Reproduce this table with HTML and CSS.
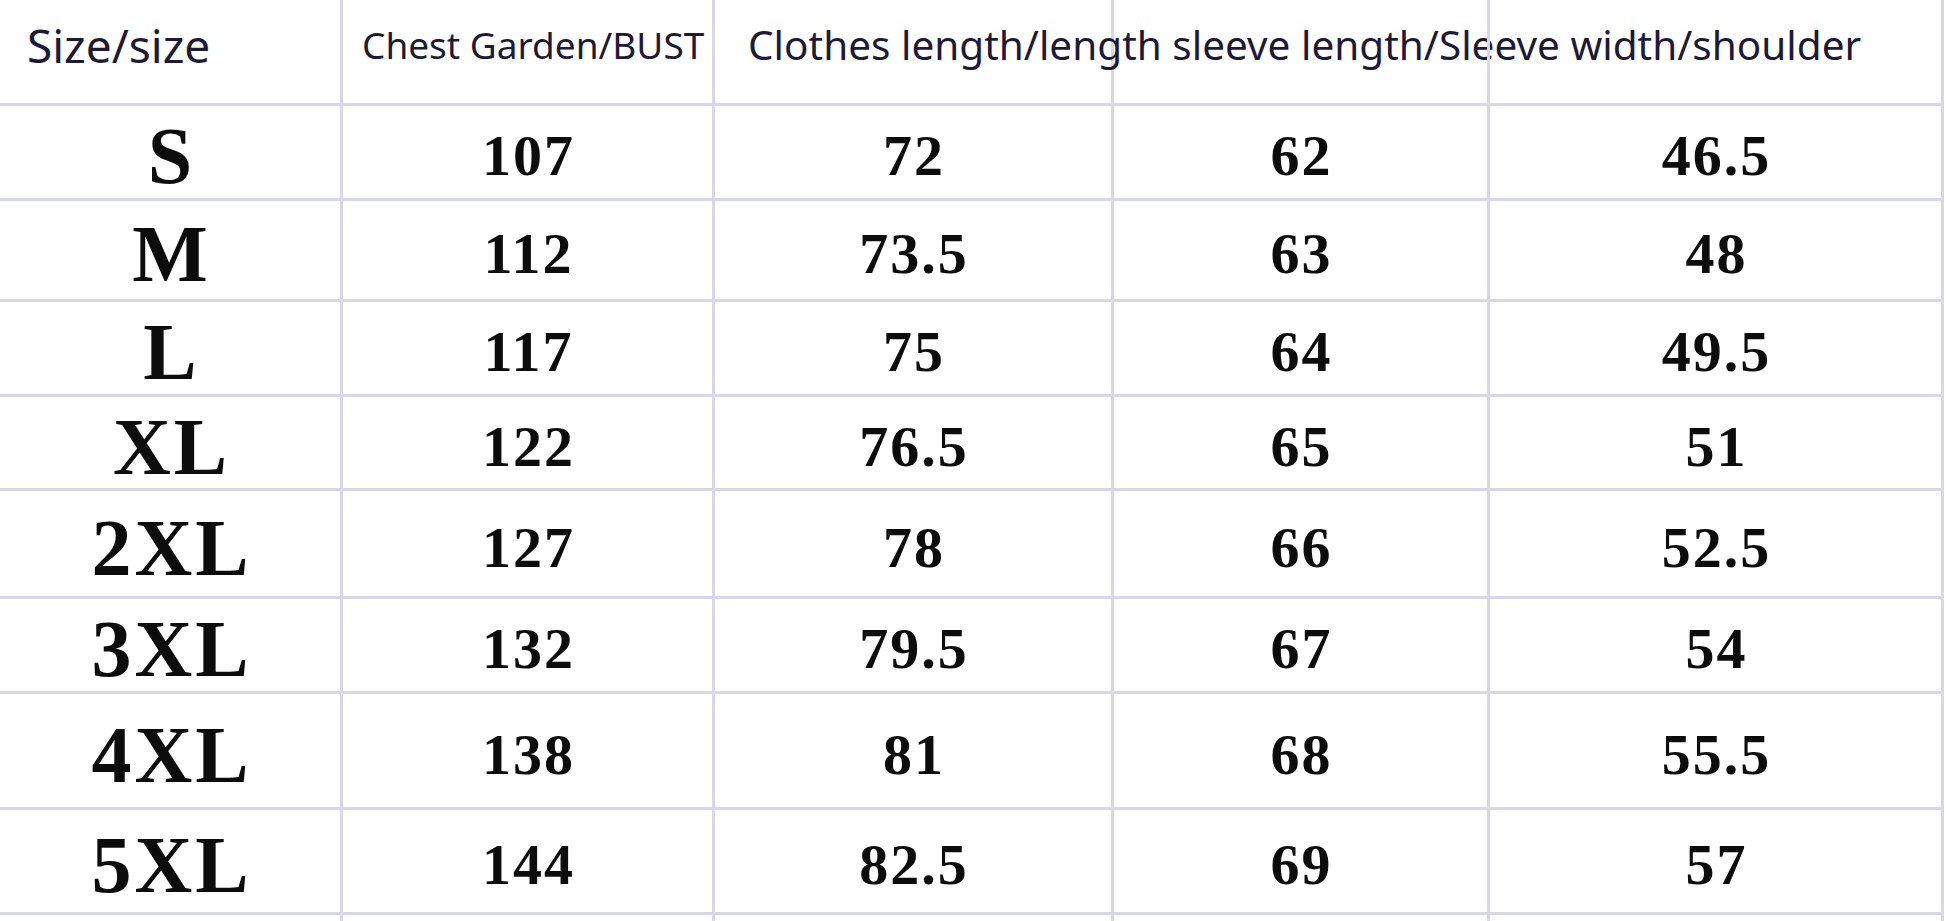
FILE: index.html
```html
<!DOCTYPE html>
<html lang="en">
<head>
<meta charset="utf-8">
<title>Size chart</title>
<link rel="stylesheet" href="styles.css">
</head>
<body>
<div class="sheet">
  <div class="row head">
    <div class="cell h-size">Size/size</div>
    <div class="cell h-bust">Chest Garden/BUST</div>
    <div class="cell h-len">Clothes length/length sleeve length/Sleeve width/shoulder</div>
    <div class="cell"></div>
    <div class="cell"></div>
  </div>
  <div class="row"><div class="cell size">S</div><div class="cell num">107</div><div class="cell num">72</div><div class="cell num">62</div><div class="cell num">46.5</div></div>
  <div class="row"><div class="cell size">M</div><div class="cell num">112</div><div class="cell num">73.5</div><div class="cell num">63</div><div class="cell num">48</div></div>
  <div class="row"><div class="cell size">L</div><div class="cell num">117</div><div class="cell num">75</div><div class="cell num">64</div><div class="cell num">49.5</div></div>
  <div class="row"><div class="cell size">XL</div><div class="cell num">122</div><div class="cell num">76.5</div><div class="cell num">65</div><div class="cell num">51</div></div>
  <div class="row"><div class="cell size">2XL</div><div class="cell num">127</div><div class="cell num">78</div><div class="cell num">66</div><div class="cell num">52.5</div></div>
  <div class="row"><div class="cell size">3XL</div><div class="cell num">132</div><div class="cell num">79.5</div><div class="cell num">67</div><div class="cell num">54</div></div>
  <div class="row"><div class="cell size">4XL</div><div class="cell num">138</div><div class="cell num">81</div><div class="cell num">68</div><div class="cell num">55.5</div></div>
  <div class="row"><div class="cell size">5XL</div><div class="cell num">144</div><div class="cell num">82.5</div><div class="cell num">69</div><div class="cell num">57</div></div>
  <div class="row tail"><div class="cell"></div><div class="cell"></div><div class="cell"></div><div class="cell"></div><div class="cell"></div></div>
</div>
</body>
</html>
```
FILE: styles.css
```css
html, body {
  margin: 0;
  padding: 0;
  background: #ffffff;
  overflow: hidden;
}

body {
  width: 1946px;
  height: 921px;
}

.sheet {
  display: flex;
  flex-direction: column;
}

.row {
  display: grid;
  grid-template-columns: 343px 372px 399px 376px 454px;
}

.cell {
  box-sizing: border-box;
  border-right: 3px solid #d7d7e7;
  border-bottom: 3px solid #d7d7e7;
  display: flex;
  align-items: center;
  justify-content: center;
  min-width: 0;
}

/* row heights */
.row:nth-child(1) { height: 106px; }
.row:nth-child(2) { height: 95px; }
.row:nth-child(3) { height: 101px; }
.row:nth-child(4) { height: 95px; }
.row:nth-child(5) { height: 94px; }
.row:nth-child(6) { height: 108px; }
.row:nth-child(7) { height: 95px; }
.row:nth-child(8) { height: 116px; }
.row:nth-child(9) { height: 105px; }
.row.tail { height: 12px; }
.row.tail .cell { border-bottom: none; }

/* header */
.head .cell {
  justify-content: flex-start;
  padding-bottom: 14px;
  font-family: "Noto Sans", "Open Sans", sans-serif;
  color: #1d1a36;
  white-space: nowrap;
  overflow: visible;
}

.h-size {
  font-size: 46px;
  padding-left: 27px;
}

.h-bust {
  font-size: 37px;
  padding-left: 19px;
}

.h-len {
  font-size: 40.5px;
  padding-left: 33px;
}

/* body */
.size,
.num {
  font-family: "Liberation Serif", "Times New Roman", serif;
  font-weight: bold;
  color: #0c0c0c;
  padding-top: 8px;
  line-height: 1;
}

.size {
  font-size: 80px;
  letter-spacing: 3px;
  padding-left: 3px;
}

.num {
  font-size: 58px;
  letter-spacing: 2px;
  padding-left: 2px;
}
```
